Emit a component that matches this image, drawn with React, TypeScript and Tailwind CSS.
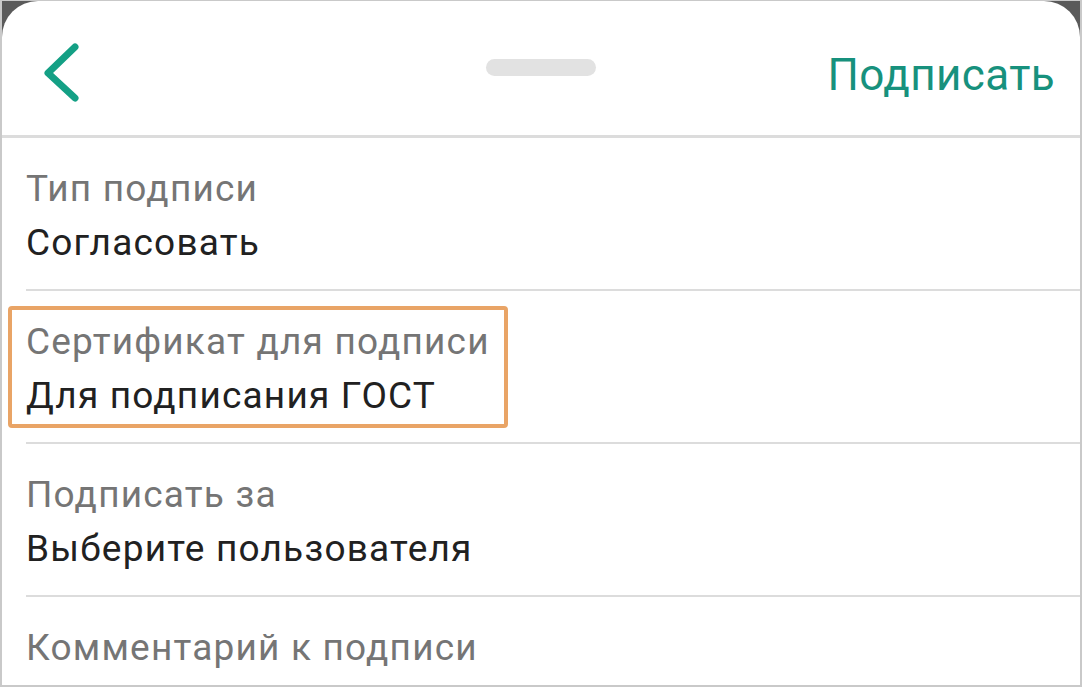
import React from "react";

const rows = [
  { label: "Тип подписи", value: "Согласовать" },
  { label: "Сертификат для подписи", value: "Для подписания ГОСТ", highlight: true },
  { label: "Подписать за", value: "Выберите пользователя" },
  { label: "Комментарий к подписи", value: "" },
];

export default function App() {
  return (
    <div
      className="w-[1082px] h-[687px] overflow-hidden bg-[#5a5a5a] border-[#c9c9c9] border-t border-l-2 border-r-2 border-b-2"
      style={{ fontFamily: "Roboto, 'Noto Sans', sans-serif" }}
    >
      <div className="h-full bg-white rounded-t-[36px] flex flex-col">
        <header className="h-[137px] shrink-0 border-b-[3px] border-[#dcdcdc] grid grid-cols-3 items-start">
          <div className="justify-self-start pl-[38px] pt-[38px]">
            <svg width="48" height="68" viewBox="0 0 48 68">
              <path
                d="M35 8 L8 34 L35 59"
                fill="none"
                stroke="#14a085"
                strokeWidth="7"
                strokeLinecap="round"
                strokeLinejoin="round"
              />
            </svg>
          </div>
          <div className="justify-self-center mt-[58px] w-[110px] h-[17px] rounded-full bg-[#e2e2e2]" />
          <div className="justify-self-end pr-[25px] pt-[46px] text-[44px] leading-[56px] tracking-[0.4px] text-[#17917d]">
            Подписать
          </div>
        </header>
        {rows.map((r, i) => (
          <div key={i} className="shrink-0 h-[153px] flex flex-col">
            <div className="relative flex-1 pl-[24px] pt-[24px]">
              {r.highlight && (
                <div className="absolute left-[6px] top-[15px] w-[500px] h-[122px] border-[4px] border-[#e9a466] rounded-[4px]" />
              )}
              <div className="text-[37px] leading-[54px] tracking-[1.2px] text-[#757575]">{r.label}</div>
              {r.value && (
                <div className="text-[37px] leading-[54px] tracking-[1.2px] text-[#212121]">{r.value}</div>
              )}
            </div>
            {i < rows.length - 1 && <div className="ml-[24px] h-[2px] bg-[#dcdcdc]" />}
          </div>
        ))}
      </div>
    </div>
  );
}
